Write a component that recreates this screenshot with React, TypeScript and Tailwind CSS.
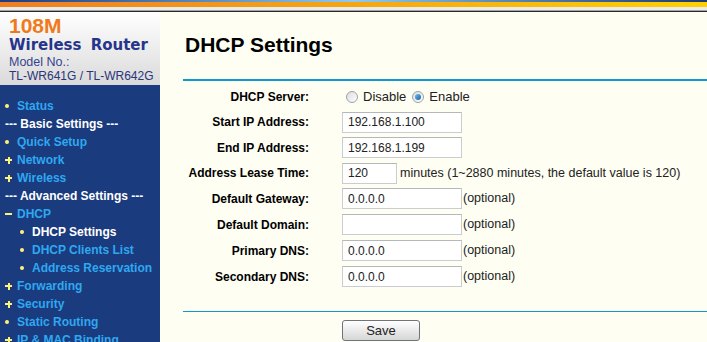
import React from "react";

type NavItem = {
  label: string;
  kind: "dot" | "plus" | "minus" | "header" | "sub";
  active?: boolean;
};

const nav: NavItem[] = [
  { label: "Status", kind: "dot" },
  { label: "--- Basic Settings ---", kind: "header" },
  { label: "Quick Setup", kind: "dot" },
  { label: "Network", kind: "plus" },
  { label: "Wireless", kind: "plus" },
  { label: "--- Advanced Settings ---", kind: "header" },
  { label: "DHCP", kind: "minus" },
  { label: "DHCP Settings", kind: "sub", active: true },
  { label: "DHCP Clients List", kind: "sub" },
  { label: "Address Reservation", kind: "sub" },
  { label: "Forwarding", kind: "plus" },
  { label: "Security", kind: "plus" },
  { label: "Static Routing", kind: "dot" },
  { label: "IP & MAC Binding", kind: "plus" },
];

function Bullet({ kind }: { kind: NavItem["kind"] }) {
  if (kind === "dot" || kind === "sub")
    return <span className="block w-[4px] h-[4px] rounded-full bg-[#fff27a]" />;
  if (kind === "plus")
    return (
      <span className="relative block w-[7px] h-[7px]">
        <span className="absolute left-0 top-[2.5px] w-[7px] h-[2px] bg-[#fff27a]" />
        <span className="absolute left-[2.5px] top-0 w-[2px] h-[7px] bg-[#fff27a]" />
      </span>
    );
  return <span className="block w-[7px] h-[2px] bg-[#fff27a]" />;
}

function Sidebar() {
  return (
    <div className="w-[160px] shrink-0 flex flex-col">
      <div className="h-[73px] shrink-0 bg-gradient-to-b from-white to-[#dadada] pl-[9px] pt-[3px] flex flex-col">
        <div className="text-[21px] leading-[22px] font-bold text-[#f07a1a]">108M</div>
        <div className="text-[15px] leading-[17px] font-bold text-[#26358a] [font-family:'DejaVu_Sans',sans-serif] [word-spacing:4px]">
          Wireless Router
        </div>
        <div className="mt-[1px] text-[12.5px] leading-[14px] text-[#36448e]">Model No.:</div>
        <div className="text-[12px] leading-[14px] text-[#2a357a]">TL-WR641G / TL-WR642G</div>
      </div>
      <div className="flex-1 bg-[#1b3b7f] pt-[12px]">
        {nav.map((item) =>
          item.kind === "header" ? (
            <div key={item.label} className="h-[18px] flex items-center pl-[5px] text-[12px] font-bold text-white whitespace-nowrap">
              {item.label}
            </div>
          ) : (
            <div
              key={item.label}
              className={
                "h-[18px] flex items-center whitespace-nowrap " +
                (item.kind === "sub" ? "pl-[20px]" : "pl-[5px]")
              }
            >
              <span className="w-[12px] flex items-center">
                <Bullet kind={item.kind} />
              </span>
              <span className={"text-[12px] font-bold " + (item.active ? "text-white" : "text-[#2ea8f0]")}>
                {item.label}
              </span>
            </div>
          )
        )}
      </div>
    </div>
  );
}

function Radio({ checked }: { checked?: boolean }) {
  return (
    <span className="w-[12px] h-[12px] rounded-full border border-[#9aa3ab] bg-gradient-to-br from-[#dcdcdc] to-white flex items-center justify-center">
      {checked && <span className="w-[6px] h-[6px] rounded-full bg-gradient-to-br from-[#6fc0ee] to-[#1660a8]" />}
    </span>
  );
}

function Field({ value, w = "w-[120px]" }: { value: string; w?: string }) {
  return (
    <div className={w + " h-[21px] border border-[#c9ccd0] border-t-[#b4b8bc] bg-white flex items-center pl-[5px] text-[12px] text-[#222]"}>
      {value}
    </div>
  );
}

function Row({ label, tall, children }: { label: string; tall?: boolean; children: React.ReactNode }) {
  return (
    <div className={(tall ? "h-[26px]" : "h-[25px]") + " flex items-center"}>
      <div className="w-[126px] text-right text-[12px] font-bold text-black whitespace-nowrap">{label}</div>
      <div className="ml-[33px] flex items-center">{children}</div>
    </div>
  );
}

const hint = "text-[12.5px] text-[#222] whitespace-nowrap";

export default function App() {
  return (
    <div className="w-[707px] h-[342px] overflow-hidden bg-[#fefef3] flex flex-col [font-family:'Liberation_Sans',Arial,sans-serif]">
      <div className="shrink-0">
        <div className="h-[2px] bg-gradient-to-r from-[#1d3c82] via-[#8fc9ee] to-[#1e3a6e]" />
        <div className="h-[5px] bg-gradient-to-r from-[#ef7e22] via-[#f4a612] to-[#ffd000]" />
        <div className="h-[3px] bg-[#ececec]" />
        <div className="h-[1px] bg-[#a4a4a4]" />
        <div className="h-[1px] bg-[#2a2a2a]" />
      </div>
      <div className="flex flex-1 min-h-0">
        <Sidebar />
        <div className="flex-1 flex flex-col pt-[21px]">
          <h1 className="ml-[25px] text-[21px] leading-[24px] font-bold text-black">DHCP Settings</h1>
          <div className="ml-[23px] mt-[22px] h-[2px] bg-[#0d9ad0]" />
          <div className="ml-[23px] pt-[3px]">
            <Row label="DHCP Server:" tall>
              <span className="ml-[4px]"><Radio /></span>
              <span className="ml-[5px] text-[13px] text-[#222]">Disable</span>
              <span className="ml-[6px]"><Radio checked /></span>
              <span className="ml-[5px] text-[13px] text-[#222]">Enable</span>
            </Row>
            <Row label="Start IP Address:">
              <Field value="192.168.1.100" />
            </Row>
            <Row label="End IP Address:" tall>
              <Field value="192.168.1.199" />
            </Row>
            <Row label="Address Lease Time:">
              <Field value="120" w="w-[55px]" />
              <span className={"ml-[3px] " + hint}>minutes (1~2880 minutes, the default value is 120)</span>
            </Row>
            <Row label="Default Gateway:" tall>
              <Field value="0.0.0.0" />
              <span className={"ml-[1px] " + hint}>(optional)</span>
            </Row>
            <Row label="Default Domain:" tall>
              <Field value="" />
              <span className={"ml-[1px] " + hint}>(optional)</span>
            </Row>
            <Row label="Primary DNS:" tall>
              <Field value="0.0.0.0" />
              <span className={"ml-[1px] " + hint}>(optional)</span>
            </Row>
            <Row label="Secondary DNS:" tall>
              <Field value="0.0.0.0" />
              <span className={"ml-[1px] " + hint}>(optional)</span>
            </Row>
          </div>
          <div className="ml-[23px] mt-[21px] h-[2px] bg-[#0d9ad0]" />
          <div className="ml-[182px] mt-[6px]">
            <button className="w-[78px] h-[21px] rounded-[3px] border border-[#707478] bg-gradient-to-b from-white to-[#d6d6d6] text-[13px] text-[#222] leading-none">
              Save
            </button>
          </div>
        </div>
      </div>
    </div>
  );
}
